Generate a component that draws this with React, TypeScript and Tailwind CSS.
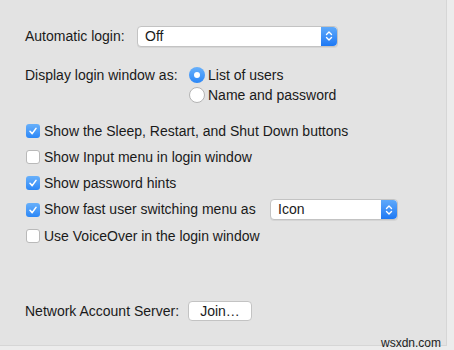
import React from "react";

const font = { fontFamily: '"Liberation Sans", Arial, sans-serif' };

const Stepper = () => (
  <div className="flex h-full w-[16px] items-center justify-center rounded-r-[4px] bg-gradient-to-b from-[#5ea9fa] to-[#1c78f4]">
    <svg width="8" height="12" viewBox="0 0 8 12" fill="none">
      <path d="M1.5 4.5 L4 2 L6.5 4.5" stroke="white" strokeWidth="1.4" strokeLinecap="round" strokeLinejoin="round" />
      <path d="M1.5 7.5 L4 10 L6.5 7.5" stroke="white" strokeWidth="1.4" strokeLinecap="round" strokeLinejoin="round" />
    </svg>
  </div>
);

const Popup = ({ value, width }: { value: string; width: string }) => (
  <div className={`flex h-[21px] ${width} items-center rounded-[4px] border border-[#c3c3c3] bg-white shadow-[0_1px_0_rgba(0,0,0,0.06)]`}>
    <span className="flex-1 pl-[7px] text-[14px] text-[#1a1a1a]">{value}</span>
    <Stepper />
  </div>
);

const Checkbox = ({ checked, label }: { checked?: boolean; label: string }) => (
  <div className="flex h-[20px] items-center">
    {checked ? (
      <div className="ml-[1px] flex h-[14px] w-[14px] items-center justify-center rounded-[3px] bg-gradient-to-b from-[#68b0fa] to-[#2a87f7]">
        <svg width="10" height="10" viewBox="0 0 10 10" fill="none">
          <path d="M2 5.3 L4.2 7.6 L8 2.4" stroke="white" strokeWidth="1.6" strokeLinecap="round" strokeLinejoin="round" />
        </svg>
      </div>
    ) : (
      <div className="ml-[1px] h-[14px] w-[14px] rounded-[3px] border border-[#b9b9b9] bg-white" />
    )}
    <span className="ml-[4px] text-[14px] text-[#1a1a1a]">{label}</span>
  </div>
);

const Radio = ({ checked, label }: { checked?: boolean; label: string }) => (
  <div className="flex h-[20px] items-center">
    {checked ? (
      <div className="flex h-[16px] w-[16px] items-center justify-center rounded-full bg-gradient-to-b from-[#68b0fa] to-[#2a87f7]">
        <div className="h-[6px] w-[6px] rounded-full bg-white" />
      </div>
    ) : (
      <div className="h-[16px] w-[16px] rounded-full border border-[#b4b4b4] bg-white" />
    )}
    <span className="ml-[3px] text-[14px] text-[#1a1a1a]">{label}</span>
  </div>
);

export default function App() {
  return (
    <div className="h-[350px] w-[454px] bg-[#ececec]" style={font}>
      <div className="relative flex h-[346px] w-[447px] flex-col border-r border-b border-[#d6d6d6] bg-[#e3e3e3] pl-[25px] pt-[26px]">
        {/* Automatic login */}
        <div className="flex h-[20px] items-center">
          <span className="w-[112px] text-[14px] text-[#1a1a1a]">Automatic login:</span>
          <Popup value="Off" width="w-[201px]" />
        </div>

        {/* Display login window */}
        <div className="mt-[19px] flex">
          <span className="flex h-[20px] w-[164px] items-center text-[14px] text-[#1a1a1a]">
            Display login window as:
          </span>
          <div className="flex flex-col">
            <Radio checked label="List of users" />
            <Radio label="Name and password" />
          </div>
        </div>

        {/* Options */}
        <div className="mt-[16px] flex flex-col gap-[6px]">
          <Checkbox checked label="Show the Sleep, Restart, and Shut Down buttons" />
          <Checkbox label="Show Input menu in login window" />
          <Checkbox checked label="Show password hints" />
          <div className="flex items-center">
            <div className="w-[245px]">
              <Checkbox checked label="Show fast user switching menu as" />
            </div>
            <Popup value="Icon" width="w-[128px]" />
          </div>
          <Checkbox label="Use VoiceOver in the login window" />
        </div>

        {/* Network account server */}
        <div className="mt-[55px] flex h-[20px] items-center">
          <span className="w-[163px] text-[14px] text-[#1a1a1a]">Network Account Server:</span>
          <button className="flex h-[20px] w-[64px] items-center justify-center rounded-[4px] border border-[#c3c3c3] bg-white text-[14px] text-[#1a1a1a]">
            Join…
          </button>
        </div>
      </div>
      <span className="absolute left-[381px] top-[334px] text-[12px] text-[#222]">wsxdn.com</span>
    </div>
  );
}
